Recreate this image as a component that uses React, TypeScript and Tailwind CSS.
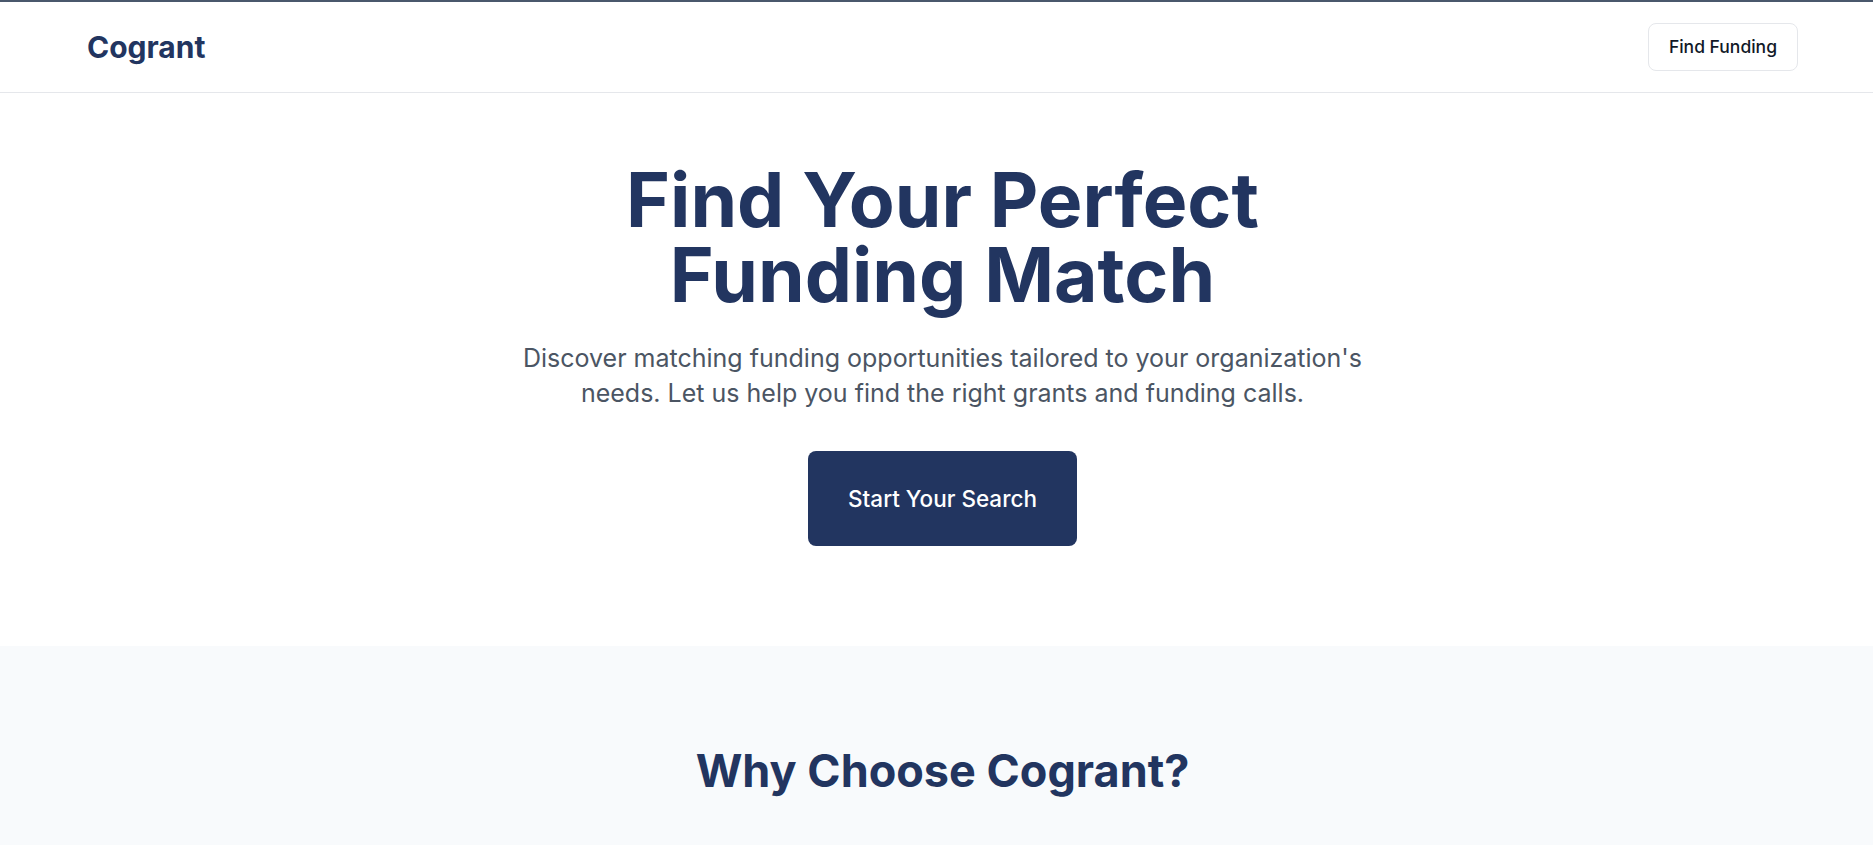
export default function App() {
  return (
    <div className="min-h-screen overflow-x-hidden bg-white font-['Inter','Noto_Sans',sans-serif]">
      <div className="w-[1885px]">
        <header className="border-t-2 border-b border-t-[#4a586c] border-b-[#e5e7eb] bg-white">
          <div className="flex h-[90px] items-center justify-between pr-[87px] pl-[87px]">
            <span className="text-[30px] font-bold text-[#223560]">Cogrant</span>
            <button className="h-[48px] rounded-[8px] border border-[#e5e7eb] bg-white px-[20px] text-[17.5px] font-medium text-[#111827]">
              Find Funding
            </button>
          </div>
        </header>

        <section className="pt-[69px] pb-[100px] text-center">
          <h1 className="text-[75px] leading-[75px] font-bold text-[#223560]">
            Find Your Perfect
            <br />
            Funding Match
          </h1>
          <p className="mx-auto mt-[29px] max-w-[870px] text-[25px] leading-[35px] text-[#4b5563]">
            Discover matching funding opportunities tailored to your organization's needs. Let us
            help you find the right grants and funding calls.
          </p>
          <button className="mt-[40px] h-[95px] rounded-[8px] bg-[#223560] px-[40px] text-[22.5px] font-medium text-white">
            Start Your Search
          </button>
        </section>

        <section className="bg-[#f8fafc] pt-[100px] pb-[100px] text-center">
          <h2 className="text-[45px] leading-[50px] font-bold text-[#223560]">Why Choose Cogrant?</h2>
        </section>
      </div>
    </div>
  );
}
